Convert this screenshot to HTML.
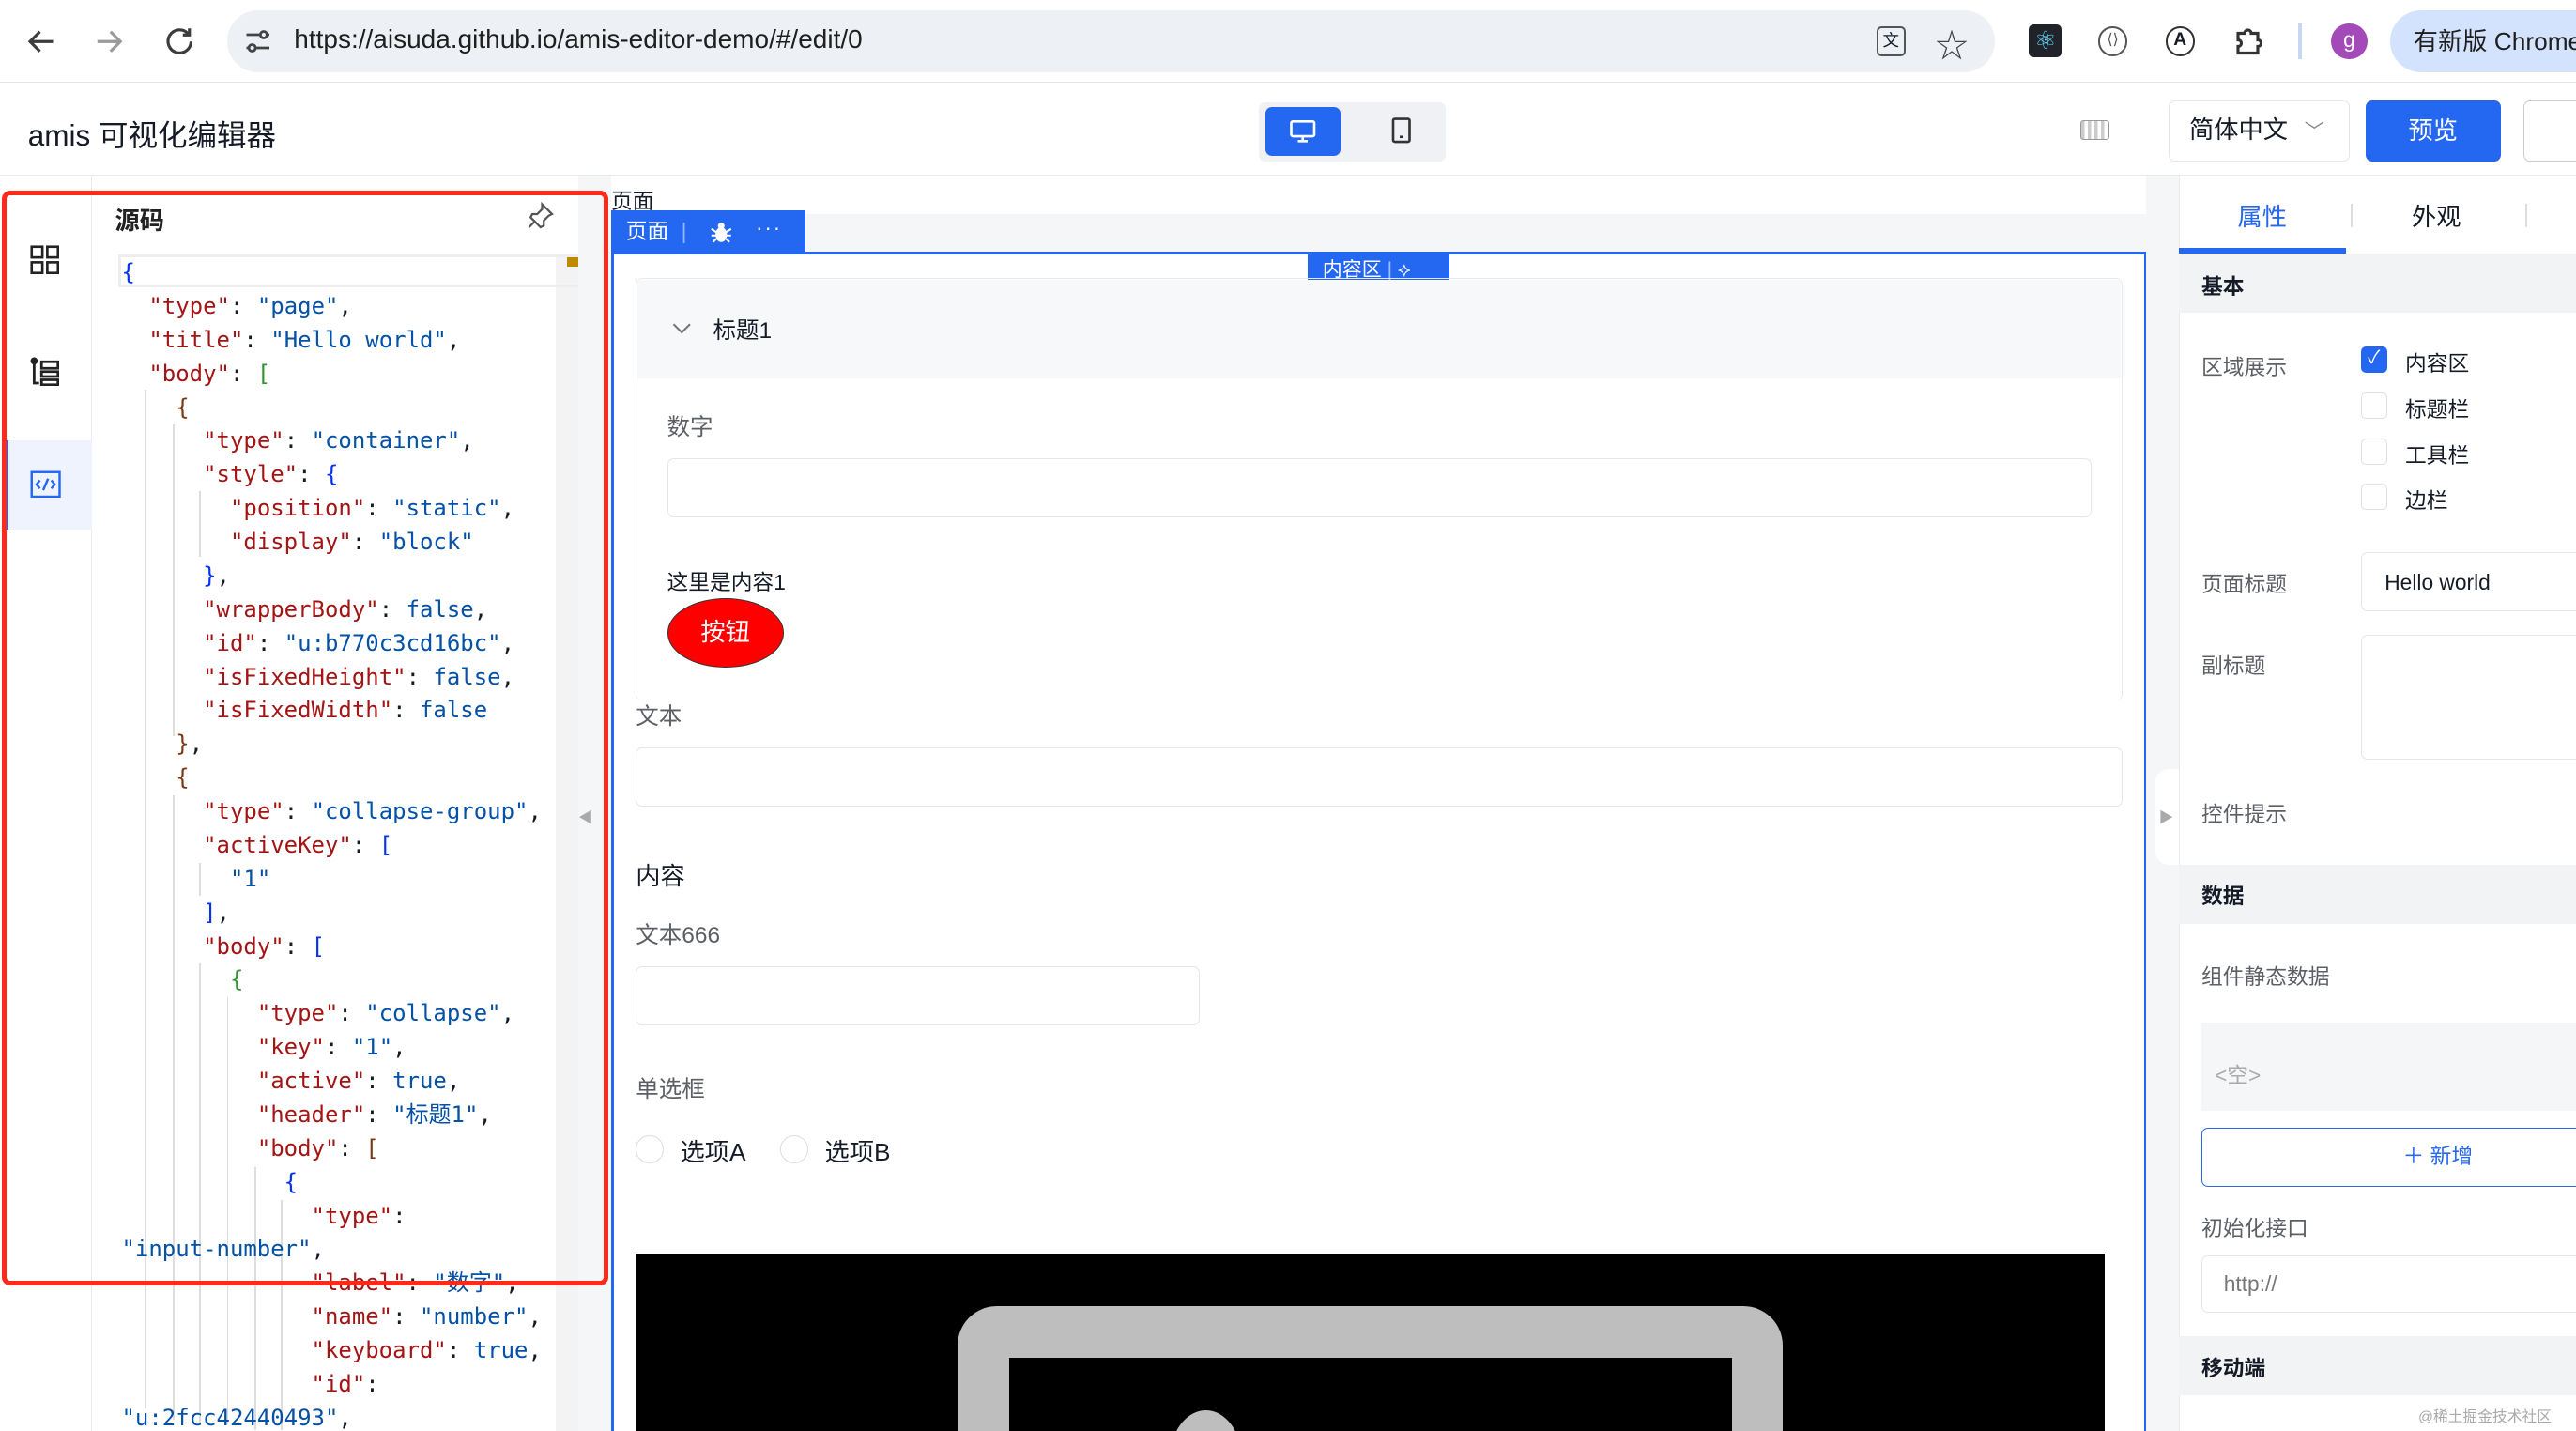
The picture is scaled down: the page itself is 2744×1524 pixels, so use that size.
<!DOCTYPE html>
<html><head><meta charset="utf-8">
<style>
*{box-sizing:border-box;margin:0;padding:0}
html,body{width:2744px;height:1524px;overflow:hidden;background:#fff}
#w{zoom:1.75;width:1568px;height:871px;position:relative;overflow:hidden;font-family:"Liberation Sans","Noto Sans CJK SC",sans-serif;color:#151b26;font-size:14px}
.a{position:absolute}
.mono{font-family:"DejaVu Sans Mono","Liberation Mono",monospace;font-size:13.7px;line-height:20.5px;white-space:pre}
.k{color:#a31515}.s{color:#0451a5}.b1{color:#0431fa}.b2{color:#319331}.b3{color:#7b3814}
.inp{position:absolute;border:1px solid #e5e6eb;border-radius:4px;background:#fff}
.lbl{position:absolute;color:#5c5f66;font-size:14px}
.cb{position:absolute;width:16px;height:16px;border:1px solid #e0e1e5;border-radius:3px;background:#fff}
</style></head><body><div id="w">
<!-- chrome bar -->
<div class="a" style="left:0;top:0;width:1568px;height:50px;background:#fff;border-bottom:1px solid #e3e3e3"></div>
<svg class="a" style="left:14px;top:14px" width="110" height="22" viewBox="0 0 110 22" fill="none" stroke="#3c3c3c" stroke-width="1.8"><path d="M18 11H5M10 5l-6 6 6 6"/><path d="M45 11h13M53 5l6 6-6 6" stroke="#9a9a9a"/><path d="M100 6a7 7 0 1 0 2 5M101 3v4h-4"/></svg>
<div class="a" style="left:138px;top:6px;width:1076px;height:38px;background:#edf0f5;border-radius:19px"></div>
<svg class="a" style="left:148px;top:17px" width="18" height="16" fill="none" stroke="#444" stroke-width="1.6"><path d="M2 4h9M14 4h2M2 12h2M7 12h9"/><circle cx="12.5" cy="4" r="2"/><circle cx="5.5" cy="12" r="2"/></svg>
<div class="a" style="left:179px;top:15px;font-size:16px;color:#1f1f1f">https://aisuda.github.io/amis-editor-demo/#/edit/0</div>
<div class="a" style="left:1142px;top:16px;width:18px;height:18px;border:1.6px solid #555;border-radius:3px;font-size:10px;text-align:center;line-height:15px">文</div>
<div class="a" style="left:1178px;top:12px;font-size:20px;color:#444">☆</div>
<div class="a" style="left:1235px;top:15px;width:20px;height:20px;background:#20232a;border-radius:3px;color:#61dafb;font-size:15px;text-align:center;line-height:20px">⚛</div>
<div class="a" style="left:1277px;top:16px;width:18px;height:18px;border:1.6px solid #555;border-radius:50%;font-size:9px;text-align:center;line-height:15px;color:#555">⟨⟩</div>
<div class="a" style="left:1318px;top:16px;width:18px;height:18px;border:1.6px solid #333;border-radius:50%;font-size:11px;font-weight:bold;text-align:center;line-height:15px">A</div>
<svg class="a" style="left:1358px;top:14px" width="22" height="22" fill="none" stroke="#333" stroke-width="1.8"><path d="M4 6h4a2 2 0 0 1 4 0h4v4a2 2 0 0 1 0 4v4H4v-4a2 2 0 0 0 0-4z"/></svg>
<div class="a" style="left:1399px;top:14px;width:2px;height:22px;background:#c9d7f0"></div>
<div class="a" style="left:1419px;top:14px;width:22px;height:22px;border-radius:50%;background:#a349b8;color:#fff;font-size:13px;text-align:center;line-height:20px">g</div>
<div class="a" style="left:1455px;top:6px;width:140px;height:38px;background:#d3e3fd;border-radius:19px;padding-left:14px;line-height:38px;font-size:15px;color:#1f1f1f">有新版 Chrome</div>
<!-- app header -->
<div class="a" style="left:0;top:51px;width:1568px;height:56px;border-bottom:1px solid #e8e9eb;background:#fff"></div>
<div class="a" style="left:17px;top:68px;font-size:18px;color:#151b26">amis 可视化编辑器</div>
<div class="a" style="left:766px;top:62px;width:114px;height:36px;background:#f0f1f4;border-radius:4px"></div>
<div class="a" style="left:770px;top:65px;width:46px;height:30px;background:#2468f2;border-radius:4px"></div>
<svg class="a" style="left:784px;top:71px" width="18" height="18" fill="none" stroke="#fff" stroke-width="1.5"><rect x="2" y="3" width="14" height="9" rx="1"/><path d="M6 15h6M9 12v3"/></svg>
<svg class="a" style="left:844px;top:70px" width="18" height="18" fill="none" stroke="#333" stroke-width="1.5"><rect x="4" y="2" width="10" height="14" rx="1"/><path d="M8 13h2"/></svg>
<div class="a" style="left:1266px;top:73px;width:18px;height:12px;border:1px solid #999;border-radius:2px;background:repeating-linear-gradient(90deg,#ccc 0 2px,#fff 2px 4px)"></div>
<div class="a" style="left:1320px;top:61px;width:110px;height:37px;border:1px solid #e5e6eb;border-radius:4px;padding-left:12px;line-height:35px;font-size:15px">简体中文 <span style="color:#888;font-size:12px;margin-left:6px">﹀</span></div>
<div class="a" style="left:1440px;top:61px;width:82px;height:37px;background:#2468f2;border-radius:4px;color:#fff;text-align:center;line-height:37px;font-size:15px">预览</div>
<div class="a" style="left:1536px;top:61px;width:60px;height:37px;border:1px solid #ccc;border-radius:4px"></div>
<!-- left icon bar -->
<div class="a" style="left:0;top:107px;width:56px;height:764px;background:#fff;border-right:1px solid #e8e9eb"></div>
<svg class="a" style="left:18px;top:149px" width="18" height="18" fill="none" stroke="#222" stroke-width="1.5"><rect x="1" y="1" width="6.5" height="6.5"/><rect x="10.5" y="1" width="6.5" height="6.5"/><rect x="1" y="10.5" width="6.5" height="6.5"/><rect x="10.5" y="10.5" width="6.5" height="6.5"/></svg>
<svg class="a" style="left:18px;top:217px" width="18" height="18" fill="none" stroke="#222" stroke-width="1.6"><circle cx="2.5" cy="2.5" r="1.4" fill="#222"/><path d="M2.5 3v13h3M7 3h10v4H7zM7 9h10v3H7zM7 14h10v3H7z"/></svg>
<div class="a" style="left:2px;top:268px;width:54px;height:54px;background:#eef3fe;border-left:3px solid #2468f2"></div>
<svg class="a" style="left:18px;top:286px" width="19" height="17" fill="none" stroke="#2468f2" stroke-width="1.4"><rect x="1" y="1" width="17" height="15"/><path d="M6 6l-2 2.5 2 2.5M13 6l2 2.5-2 2.5M11 5l-3 7"/></svg>
<!-- source panel -->
<div class="a" style="left:56px;top:107px;width:296px;height:764px;background:#fff"></div>
<div class="a" style="left:70px;top:122px;font-size:15px;font-weight:bold;color:#222">源码</div>
<svg class="a" style="left:320px;top:122px" width="18" height="18" fill="none" stroke="#555" stroke-width="1.3"><path d="M10 2l6 6-2 1-3 3 0 3-2 1-6-6 1-2 3 0 3-3z M6 12l-4 4"/></svg>
<div class="a" style="left:338px;top:155px;width:14px;height:716px;background:#f3f3f3"></div>
<div class="a" style="left:345px;top:156px;width:7px;height:6px;background:#c08a00"></div>
<div class="a" style="left:72px;top:155px;width:280px;height:20px;border:2px solid #eee;border-right:none"></div>
<div class="a" style="left:88px;top:237px;width:1px;height:620px;background:#ddd"></div>
<div class="a" style="left:105px;top:258px;width:1px;height:190px;background:#ddd"></div>
<div class="a" style="left:121px;top:299px;width:1px;height:40px;background:#ddd"></div>
<div class="a" style="left:105px;top:484px;width:1px;height:380px;background:#ddd"></div>
<div class="a" style="left:121px;top:525px;width:1px;height:20px;background:#ddd"></div>
<div class="a" style="left:121px;top:586px;width:1px;height:280px;background:#ddd"></div>
<div class="a" style="left:138px;top:607px;width:1px;height:260px;background:#ddd"></div>
<div class="a" style="left:155px;top:710px;width:1px;height:160px;background:#ddd"></div>
<div class="a" style="left:171px;top:730px;width:1px;height:140px;background:#ddd"></div>
<div class="a mono" style="left:74px;top:156px"><span class="b1">{</span>
  <span class="k">"type"</span>: <span class="s">"page"</span>,
  <span class="k">"title"</span>: <span class="s">"Hello world"</span>,
  <span class="k">"body"</span>: <span class="b2">[</span>
    <span class="b3">{</span>
      <span class="k">"type"</span>: <span class="s">"container"</span>,
      <span class="k">"style"</span>: <span class="b1">{</span>
        <span class="k">"position"</span>: <span class="s">"static"</span>,
        <span class="k">"display"</span>: <span class="s">"block"</span>
      <span class="b1">}</span>,
      <span class="k">"wrapperBody"</span>: <span class="s">false</span>,
      <span class="k">"id"</span>: <span class="s">"u:b770c3cd16bc"</span>,
      <span class="k">"isFixedHeight"</span>: <span class="s">false</span>,
      <span class="k">"isFixedWidth"</span>: <span class="s">false</span>
    <span class="b3">}</span>,
    <span class="b3">{</span>
      <span class="k">"type"</span>: <span class="s">"collapse-group"</span>,
      <span class="k">"activeKey"</span>: <span class="b1">[</span>
        <span class="s">"1"</span>
      <span class="b1">]</span>,
      <span class="k">"body"</span>: <span class="b1">[</span>
        <span class="b2">{</span>
          <span class="k">"type"</span>: <span class="s">"collapse"</span>,
          <span class="k">"key"</span>: <span class="s">"1"</span>,
          <span class="k">"active"</span>: <span class="s">true</span>,
          <span class="k">"header"</span>: <span class="s">"标题1"</span>,
          <span class="k">"body"</span>: <span class="b3">[</span>
            <span class="b1">{</span>
              <span class="k">"type"</span>:
<span class="s">"input-number"</span>,
              <span class="k">"label"</span>: <span class="s">"数字"</span>,
              <span class="k">"name"</span>: <span class="s">"number"</span>,
              <span class="k">"keyboard"</span>: <span class="s">true</span>,
              <span class="k">"id"</span>:
<span class="s">"u:2fcc42440493"</span>,</div>
<!-- canvas -->
<div class="a" style="left:352px;top:107px;width:20px;height:764px;background:#f5f6f8"></div>
<div class="a" style="left:352px;top:490px;width:12px;height:16px;color:#aaa;font-size:9px">◀</div>
<div class="a" style="left:372px;top:107px;width:954px;height:764px;background:#fff"></div>
<div class="a" style="left:372px;top:112px;font-size:13px;color:#151b26">页面</div>
<div class="a" style="left:372px;top:130px;width:954px;height:24px;background:#f5f6f8"></div>
<div class="a" style="left:372px;top:128px;width:118px;height:26px;background:#2468f2;color:#fff;font-size:13px;line-height:26px;padding-left:9px">页面 <span style="opacity:.5;margin:0 4px">|</span></div>
<svg class="a" style="left:432px;top:134px" width="14" height="14" fill="#fff"><ellipse cx="7" cy="8.5" rx="3.5" ry="4.5"/><circle cx="7" cy="3.2" r="2"/><path d="M1 5l3 2M13 5l-3 2M1 9h3M13 9h-3M2 13l2-2M12 13l-2-2" stroke="#fff" stroke-width="1.2"/></svg>
<div class="a" style="left:460px;top:131px;color:#fff;font-size:13px;letter-spacing:1px">···</div>
<div class="a" style="left:372px;top:153px;width:935px;height:720px;border:2px solid #2468f2;border-bottom:none"></div>
<div class="a" style="left:796px;top:155px;width:86px;height:19px;background:#2468f2;border-radius:0 0 3px 3px;color:#fff;font-size:12px;line-height:19px;padding-left:9px">内容区 <span style="opacity:.6">|</span> ⟡</div>
<div class="a" style="left:387px;top:169px;width:905px;height:257px;border:1px solid #e8e9eb;border-radius:4px;border-bottom:none"></div>
<div class="a" style="left:388px;top:170px;width:903px;height:60px;background:#f7f8fa"></div>
<svg class="a" style="left:408px;top:194px" width="14" height="12" fill="none" stroke="#777" stroke-width="1.2"><path d="M2 3l5 5 5-5"/></svg>
<div class="a" style="left:434px;top:190px;font-size:14px">标题1</div>
<div class="lbl" style="left:406px;top:249px">数字</div>
<div class="inp" style="left:406px;top:279px;width:867px;height:36px"></div>
<div class="a" style="left:406px;top:344px;font-size:13px">这里是内容1</div>
<div class="a" style="left:406px;top:364px;width:71px;height:42px;border-radius:50%;background:#f00;border:1px solid #333;color:#fff;font-size:15px;text-align:center;line-height:40px">按钮</div>
<div class="lbl" style="left:387px;top:425px">文本</div>
<div class="inp" style="left:387px;top:455px;width:905px;height:36px"></div>
<div class="a" style="left:387px;top:521px;font-size:15px;color:#151b26">内容</div>
<div class="lbl" style="left:387px;top:558px">文本666</div>
<div class="inp" style="left:387px;top:588px;width:343px;height:36px"></div>
<div class="lbl" style="left:387px;top:652px">单选框</div>
<div class="a" style="left:387px;top:691px;width:17px;height:17px;border:1px solid #dcdde0;border-radius:50%"></div>
<div class="a" style="left:414px;top:689px;font-size:15px">选项A</div>
<div class="a" style="left:475px;top:691px;width:17px;height:17px;border:1px solid #dcdde0;border-radius:50%"></div>
<div class="a" style="left:502px;top:689px;font-size:15px">选项B</div>
<div class="a" style="left:387px;top:763px;width:894px;height:110px;background:#000;overflow:hidden">
 <div class="a" style="left:196px;top:32px;width:502px;height:120px;background:#bebebe;border-radius:24px 24px 0 0"></div>
 <div class="a" style="left:227px;top:63px;width:440px;height:60px;background:#000"></div>
 <div class="a" style="left:325px;top:95px;width:44px;height:60px;background:#bebebe;border-radius:50% 50% 0 0"></div>
</div>
<div class="a" style="left:1306px;top:107px;width:20px;height:764px;background:#f5f6f8"></div>
<div class="a" style="left:1312px;top:468px;width:14px;height:58px;background:#fff;border-radius:8px 0 0 8px"></div>
<div class="a" style="left:1314px;top:490px;color:#aaa;font-size:9px">▶</div>
<!-- red box on top -->
<div class="a" style="left:1px;top:116px;width:369px;height:666px;border:3px solid #ff2a1a;border-radius:5px;z-index:5"></div>
<!-- right panel -->
<div class="a" style="left:1326px;top:107px;width:242px;height:764px;background:#fff;border-left:1px solid #e8e9eb"></div>
<div class="a" style="left:1362px;top:120px;font-size:15px;color:#2468f2">属性</div>
<div class="a" style="left:1431px;top:124px;width:1px;height:14px;background:#ddd"></div>
<div class="a" style="left:1468px;top:120px;font-size:15px">外观</div>
<div class="a" style="left:1537px;top:124px;width:1px;height:14px;background:#ddd"></div>
<div class="a" style="left:1326px;top:154px;width:242px;height:1px;background:#e8e9eb"></div>
<div class="a" style="left:1326px;top:151px;width:102px;height:3px;background:#2468f2"></div>
<div class="a" style="left:1326px;top:155px;width:242px;height:35px;background:#f2f3f5"></div>
<div class="a" style="left:1340px;top:164px;font-size:13px;font-weight:bold">基本</div>
<div class="lbl" style="left:1340px;top:213px;font-size:13px">区域展示</div>
<div class="cb" style="left:1437px;top:211px;background:#2468f2;border-color:#2468f2;color:#fff;font-size:11px;text-align:center;line-height:14px">✓</div>
<div class="a" style="left:1464px;top:211px;font-size:13px">内容区</div>
<div class="cb" style="left:1437px;top:239px"></div><div class="a" style="left:1464px;top:239px;font-size:13px">标题栏</div>
<div class="cb" style="left:1437px;top:267px"></div><div class="a" style="left:1464px;top:267px;font-size:13px">工具栏</div>
<div class="cb" style="left:1437px;top:294px"></div><div class="a" style="left:1464px;top:294px;font-size:13px">边栏</div>
<div class="lbl" style="left:1340px;top:345px;font-size:13px">页面标题</div>
<div class="inp" style="left:1437px;top:336px;width:140px;height:36px;padding:10px 14px;font-size:13px">Hello world</div>
<div class="lbl" style="left:1340px;top:395px;font-size:13px">副标题</div>
<div class="inp" style="left:1437px;top:386px;width:140px;height:76px"></div>
<div class="lbl" style="left:1340px;top:485px;font-size:13px">控件提示</div>
<div class="a" style="left:1326px;top:526px;width:242px;height:36px;background:#f2f3f5"></div>
<div class="a" style="left:1340px;top:535px;font-size:13px;font-weight:bold">数据</div>
<div class="lbl" style="left:1340px;top:584px;font-size:13px">组件静态数据</div>
<div class="a" style="left:1340px;top:622px;width:240px;height:54px;background:#f5f6f8"></div>
<div class="a" style="left:1348px;top:644px;font-size:13px;color:#aaa">&lt;空&gt;</div>
<div class="a" style="left:1340px;top:686px;width:240px;height:36px;border:1px solid #2468f2;border-radius:4px;color:#2468f2;font-size:13px;line-height:34px;padding-left:122px">＋ 新增</div>
<div class="lbl" style="left:1340px;top:737px;font-size:13px">初始化接口</div>
<div class="inp" style="left:1340px;top:764px;width:240px;height:35px;padding:9px 13px;font-size:13px;color:#777">http://</div>
<div class="a" style="left:1326px;top:813px;width:242px;height:36px;background:#f2f3f5"></div>
<div class="a" style="left:1340px;top:822px;font-size:13px;font-weight:bold">移动端</div>
<div class="a" style="left:1472px;top:855px;font-size:9px;color:#aaa">@稀土掘金技术社区</div>
</div></body></html>
